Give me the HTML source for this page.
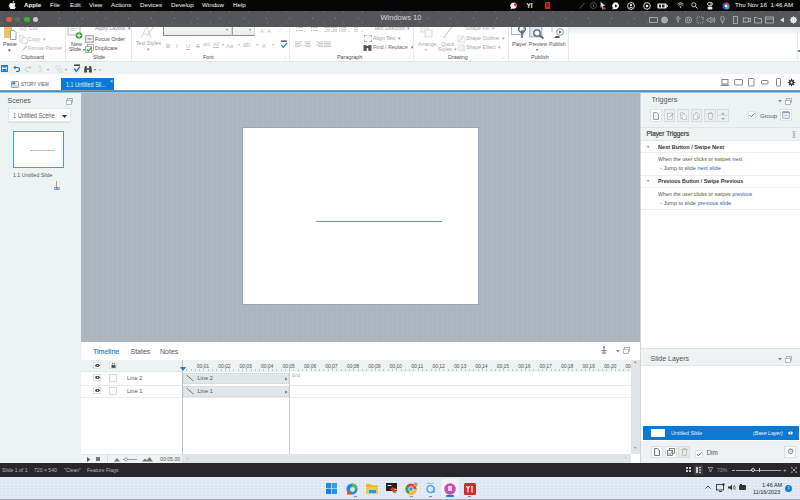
<!DOCTYPE html>
<html><head><meta charset="utf-8">
<style>
*{margin:0;padding:0;box-sizing:border-box}
html,body{width:800px;height:500px;overflow:hidden;background:#fff;font-family:"Liberation Sans",sans-serif}
.a{position:absolute}
.t{position:absolute;white-space:nowrap;line-height:1}
#menubar{left:0;top:0;width:800px;height:11px;background:#050505;color:#f6f6f6;font-size:6.2px}
#menubar .t{top:2px}
#titlebar{left:0;top:11px;width:800px;height:16px;background:#55565a;background-image:radial-gradient(circle,#b08048 0.5px,transparent 0.8px),radial-gradient(circle,#a07848 0.5px,transparent 0.8px);background-size:23px 13px,19px 11px;background-position:2px 1px,11px 6px}
#ribbon{overflow:hidden;left:0;top:27px;width:800px;height:35px;background:#fff;border-bottom:1px solid #e3e7e7;color:#8a8a8a;font-size:5.2px}
#qat{left:0;top:62px;width:800px;height:12px;background:#edf2f2}
#tabrow{left:0;top:74px;width:800px;height:16px;background:#fff}
#tabline{left:0;top:90px;width:800px;height:3px;background:linear-gradient(#7f98ad 0 1px,#3d92d2 1px 2px,#8ccbee 2px 3px)}
#scenes{left:0;top:93px;width:81px;height:370px;background:#ebf4f3;border-right:3px solid #f0f0f2}
#stage{left:81px;top:93px;width:559px;height:249px;background:#adb6be;background-image:repeating-linear-gradient(90deg,#b0b6be 0 3px,#aab6bf 3px 5px)}
#slide{left:243px;top:128px;width:235px;height:176px;background:#fff;box-shadow:0 0 0 1px #9ea7af}
#timeline{left:81px;top:342px;width:559px;height:121px;background:#fff}
#trig{left:640px;top:93px;width:160px;height:255px;background:#fff;border-left:1px solid #cfd6d9}
#layers{left:640px;top:348px;width:160px;height:115px;background:#fff;border-left:1px solid #cfd6d9}
#status{left:0;top:463px;width:800px;height:14px;background:#27272b;color:#b8b8b8;font-size:5.1px}
#taskbar{left:0;top:477px;width:800px;height:23px;background:#dfe6f3;border-bottom:1px solid #a9aeb6;background-image:radial-gradient(circle,#eef3fb .5px,transparent .8px);background-size:4px 3px}
.sep{position:absolute;width:1px;background:#e6e9e9}
.gl{position:absolute;color:#505050;font-size:5.4px;line-height:1;white-space:nowrap}
</style></head><body>

<!-- MAC MENU BAR -->
<div id="menubar" class="a">
 <svg class="a" style="left:9px;top:1px" width="7" height="8" viewBox="0 0 14 16"><path fill="#f0f0f0" d="M11.6 8.5c0-2 1.7-3 1.8-3.1-1-1.4-2.5-1.6-3-1.6-1.3-.1-2.5.8-3.100.8-.7 0-1.700-.8-2.800-.7C3 3.900 1.600 4.700.9 6c-1.500 2.600-.4 6.400 1 8.500.7 1 1.500 2.200 2.600 2.100 1 0 1.400-.7 2.700-.7s1.600.7 2.700.7c1.100 0 1.800-1 2.500-2.100.8-1.100 1.100-2.200 1.100-2.300-.1 0-2.100-.8-2.100-3.200zM9.600 2.400c.6-.7 1-1.700.9-2.600-.8 0-1.800.5-2.400 1.200-.5.600-1 1.600-.9 2.500.9.100 1.800-.4 2.400-1.100z"/></svg>
 <span class="t" style="left:24px;font-weight:bold">Apple</span>
 <span class="t" style="left:50px">File</span>
 <span class="t" style="left:70px">Edit</span>
 <span class="t" style="left:89px">View</span>
 <span class="t" style="left:111px">Actions</span>
 <span class="t" style="left:140px">Devices</span>
 <span class="t" style="left:171px">Develop</span>
 <span class="t" style="left:202px">Window</span>
 <span class="t" style="left:233px">Help</span>
 <span class="t" style="left:735px">Thu Nov 16&nbsp; 1:46 AM</span>
 <svg class="a" style="left:509.5px;top:1.5px" width="9" height="8" viewBox="0 0 9 8"><path d="M4 .5 A3.5 3.2 0 1 1 2 6.6 L.6 7.5 L1 5.6 A3.5 3.2 0 0 1 4 .5z" fill="#f4f4f4"/><circle cx="5.5" cy="2.8" r="1.6" fill="#e23a3a"/></svg>
 <span class="t" style="left:526.5px;top:2.5px;font-size:6.5px;font-weight:bold;color:#f0f0f0">YI</span>
 <svg class="a" style="left:545px;top:2px" width="5" height="7" viewBox="0 0 5 7"><rect x="0" y="0" width="5" height="7" fill="#c42a2a"/><rect x="1" y="1.5" width="3" height=".8" fill="#5a0a0a"/><rect x="1" y="3.5" width="3" height=".8" fill="#5a0a0a"/></svg>
 <svg class="a" style="left:579px;top:2px" width="6" height="7" viewBox="0 0 6 7"><path d="M.5 6.5 L5.5 1" stroke="#6a6a6a" stroke-width=".8"/></svg>
 <svg class="a" style="left:589.5px;top:2px" width="7" height="7" viewBox="0 0 7 7"><circle cx="3.5" cy="3.5" r="3" fill="none" stroke="#5a5a5a" stroke-width=".8"/><rect x="3" y="2" width="1" height="3" fill="#5a5a5a"/></svg>
 <svg class="a" style="left:600px;top:1px" width="6" height="9" viewBox="0 0 6 9"><path d="M.5 .5 L5.5 5 L3 5 L4 8 L2.5 8.5 L1.5 5.5 L.5 7z" fill="#ddd" stroke="#333" stroke-width=".4"/><circle cx="4.5" cy="7.5" r="1.2" fill="#c03030"/></svg>
 <svg class="a" style="left:612px;top:1.5px" width="8" height="8" viewBox="0 0 8 8"><path d="M4 .3 A3.7 3.5 0 1 1 1.7 6.9 L.3 7.7 L.8 5.6 A3.7 3.5 0 0 1 4 .3z" fill="#f4f4f4"/><path d="M3 2.3 L5.6 3.9 L3 5.5z" fill="#111"/></svg>
 <svg class="a" style="left:627px;top:1.5px" width="8" height="8" viewBox="0 0 8 8"><circle cx="4" cy="4" r="3.4" fill="none" stroke="#f0f0f0" stroke-width=".9"/><circle cx="4" cy="3.2" r="1.1" fill="#f0f0f0"/><path d="M2 6 Q4 4 6 6" fill="#f0f0f0"/></svg>
 <svg class="a" style="left:642.5px;top:1.5px" width="8" height="8" viewBox="0 0 8 8"><circle cx="4" cy="4" r="3.3" fill="none" stroke="#f0f0f0" stroke-width=".9"/><circle cx="4" cy="4" r="1.3" fill="#f0f0f0"/></svg>
 <svg class="a" style="left:657px;top:2.5px" width="11" height="6" viewBox="0 0 11 6"><rect x=".4" y=".4" width="9.2" height="5.2" rx="1" fill="#f0f0f0"/><rect x="9.8" y="2" width="1" height="2" fill="#f0f0f0"/><rect x="2" y="1.6" width="2" height="2.8" fill="#222"/><rect x="5" y="1.6" width="2.5" height="2.8" fill="#222"/></svg>
 <svg class="a" style="left:677px;top:2px" width="7" height="6" viewBox="0 0 7 6"><path d="M.3 2.2 A4.5 4.5 0 0 1 6.7 2.2 M1.4 3.4 A3 3 0 0 1 5.6 3.4" stroke="#eee" stroke-width=".8" fill="none"/><circle cx="3.5" cy="5" r=".8" fill="#eee"/></svg>
 <svg class="a" style="left:691px;top:2px" width="7" height="7" viewBox="0 0 7 7"><circle cx="2.8" cy="2.8" r="2.1" fill="none" stroke="#eee" stroke-width=".8"/><path d="M4.4 4.4 L6.5 6.5" stroke="#eee" stroke-width=".9"/></svg>
 <svg class="a" style="left:706px;top:1.5px" width="8" height="8" viewBox="0 0 8 8"><rect x="1.5" y=".5" width="5" height="3" rx="1.5" fill="none" stroke="#eee" stroke-width=".8"/><rect x="1.5" y="4.5" width="5" height="3" rx="1.5" fill="#eee"/><circle cx="5" cy="2" r=".8" fill="#eee"/></svg>
 <svg class="a" style="left:722px;top:1.5px" width="8" height="8" viewBox="0 0 8 8"><circle cx="4" cy="4" r="3.5" fill="#3a5ad0"/><path d="M4 .5 A3.5 3.5 0 0 1 7.5 4 H4z" fill="#d04080"/><path d="M4 4 H7.5 A3.5 3.5 0 0 1 4 7.5z" fill="#30b0d0"/><circle cx="4" cy="4" r="1.3" fill="#fff"/></svg>
</div>

<!-- TITLE BAR -->
<div id="titlebar" class="a">
 <div class="a" style="left:6px;top:5.6px;width:5.6px;height:5.6px;border-radius:50%;background:#e2564c"></div>
 <div class="a" style="left:14.7px;top:5.6px;width:5.6px;height:5.6px;border-radius:50%;background:#6c6c6e"></div>
 <div class="a" style="left:24.1px;top:5.6px;width:5.6px;height:5.6px;border-radius:50%;background:#33b83c"></div>
 <div class="a" style="left:32.5px;top:5.6px;width:5.6px;height:5.6px;border-radius:50%;background:#cfcfcf"></div>
 <span class="t" style="left:380.5px;top:3px;font-size:7.5px;color:#d8d8d8">Windows 10</span>
 <svg class="a" style="left:649px;top:5px" width="150" height="8" viewBox="0 0 150 8">
  <g fill="none" stroke="#b8b8b8" stroke-width=".8">
   <rect x=".5" y="1.5" width="8" height="5"/>
   <circle cx="15.5" cy="4" r="3" fill="#aaa"/>
   <path d="M28 1 A1.5 1.5 0 0 1 30 1 V4 A1.5 1.5 0 0 1 28 4z M29 5 V7"/>
   <circle cx="39.5" cy="4" r="3"/><circle cx="39.5" cy="4" r="1.2"/>
   <rect x="48" y="1" width="6" height="6" stroke-dasharray="1 1"/>
   <path d="M58 3 H60 L62 1 V7 L60 5 H58z M63.5 2 Q65 4 63.5 6 M65 1 Q67 4 65 7"/>
   <path d="M72 1.5 A1.5 1.5 0 0 1 75 1.5 V4 A1.5 1.5 0 0 1 72 4z M73.5 5.5 V7.5"/>
   <rect x="84.5" y=".5" width="4" height="7"/>
   <rect x="94.5" y="2" width="5" height="4"/><path d="M99.5 3 L101.5 2 V6 L99.5 5"/>
   <path d="M105.5 1.5 H108 L109 2.5 H112.5 V7 H105.5z"/>
   <rect x="116.5" y="1" width="8" height="6"/><path d="M117 3 H124"/>
  </g>
  <path d="M131 4 L135 1.5 V6.5z" fill="#ddd"/>
  <circle cx="144.5" cy="4" r="2.2" fill="none" stroke="#eee" stroke-width="1.5"/>
  <path d="M144.5 .3 V7.7 M140.8 4 H148.2 M141.9 1.4 L147.1 6.6 M147.1 1.4 L141.9 6.6" stroke="#eee" stroke-width="1"/>
 </svg>
</div>

<!-- RIBBON -->
<div id="ribbon" class="a">
 <!-- clipboard -->
 <svg class="a" style="left:3px;top:0" width="14" height="13" viewBox="0 0 14 13"><rect x="1" y="-2" width="8" height="13" fill="#eec068"/><path d="M7.5 3.5 H11 L13 5.5 V12.5 H7.5z" fill="#fff" stroke="#888" stroke-width=".8"/></svg>
 <span class="gl" style="left:3px;top:15px">Paste</span>
 <span class="gl" style="left:8px;top:21px;font-size:5px">▾</span>
 <span class="t" style="left:29px;top:-1px;color:#a0a0a0">Cut</span>
 <svg class="a" style="left:19px;top:0" width="8" height="4" viewBox="0 0 8 4"><circle cx="2" cy="2.2" r="1.4" fill="none" stroke="#c8c8c8" stroke-width=".7"/><circle cx="6" cy="2.2" r="1.4" fill="none" stroke="#c8c8c8" stroke-width=".7"/></svg>
 <svg class="a" style="left:18.5px;top:7.5px" width="9" height="9" viewBox="0 0 9 9"><path d="M.6 .6 H4 L5.5 2 V6.4 H.6z" fill="#fbfbfb" stroke="#cfcfcf" stroke-width=".7"/><path d="M3 2.6 H6.4 L8.4 4.6 V8.4 H3z" fill="#fbfbfb" stroke="#c8c8c8" stroke-width=".7"/></svg>
 <span class="t" style="left:28px;top:9.5px;color:#b0b0b0">Copy &nbsp;▾</span>
 <svg class="a" style="left:20.5px;top:17.5px" width="7" height="7" viewBox="0 0 7 7"><path d="M6 1 L2.5 4.5" stroke="#c5c5c5" stroke-width="1.4"/><path d="M2.5 4.5 L.8 6.3" stroke="#b8b8b8" stroke-width="1"/></svg>
 <span class="t" style="left:28px;top:18.5px;color:#b0b0b0">Format Painter</span>
 <span class="gl" style="left:21px;top:27.5px">Clipboard</span>
 <div class="sep" style="left:65px;top:0;height:34px"></div>
 <!-- slide -->
 <svg class="a" style="left:67px;top:0" width="17" height="13" viewBox="0 0 17 13"><rect x="1" y="-1" width="12" height="9" fill="#fbfbfb" stroke="#a8a8a8" stroke-width=".8"/><rect x="3" y="1" width="8" height="1" fill="#d0d0d0"/><rect x="3" y="3" width="6" height="1" fill="#d8d8d8"/><circle cx="12" cy="8.5" r="3.3" fill="#3aa845"/><path d="M12 6.6 V10.4 M10.1 8.5 H13.9" stroke="#fff" stroke-width="1.1"/></svg>
 <span class="gl" style="left:71px;top:14.5px">New</span>
 <span class="gl" style="left:69px;top:20px">Slide <span style="font-size:4px">▾</span></span>
 <span class="t" style="left:95px;top:-1.5px;color:#8a8a8a">Apply Layout &nbsp;▾</span>
 <svg class="a" style="left:85px;top:8px" width="9" height="8" viewBox="0 0 9 8"><rect x=".8" y=".8" width="7.4" height="6.4" fill="#f8f8f8" stroke="#7a7a7a" stroke-width=".8"/><rect x="2.5" y="3.5" width="4" height=".9" fill="#555"/></svg>
 <span class="gl" style="left:95px;top:10px">Focus Order</span>
 <svg class="a" style="left:85px;top:17px" width="9" height="9" viewBox="0 0 9 9"><rect x="2.5" y=".5" width="6" height="6" fill="#fff" stroke="#8a8a8a" stroke-width=".7"/><rect x=".5" y="2.5" width="6" height="6" fill="#eef4ea" stroke="#8a8a8a" stroke-width=".7"/><path d="M1.8 5.5 L3.4 7.2 L6.5 3.2" stroke="#2f9a3a" stroke-width="1.1" fill="none"/></svg>
 <span class="gl" style="left:95px;top:19px">Duplicate</span>
 <span class="gl" style="left:93px;top:28px">Slide</span>
 <div class="sep" style="left:131px;top:0;height:34px"></div>
 <!-- font -->
 <svg class="a" style="left:138px;top:0" width="18" height="12" viewBox="0 0 18 12"><path d="M3 11 L9 -1 L13 11 M5 7 H11" fill="none" stroke="#dcdcdc" stroke-width="1.2"/><path d="M16 -1 L9 9" stroke="#d0d0d0" stroke-width="1"/></svg>
 <span class="t" style="left:136px;top:14px;color:#a0a0a0">Text Styles</span>
 <span class="t" style="left:147px;top:20px;color:#a0a0a0;font-size:5px">▾</span>
 <div class="a" style="left:162.5px;top:-2px;width:69.5px;height:11px;background:linear-gradient(#f6f7f7,#e9ecec);border:1px solid #d5d5d5;border-left-color:#8f8f8f;border-bottom-color:#8f8f8f"></div>
 <div class="a" style="left:232px;top:-2px;width:22.5px;height:11px;background:linear-gradient(#f6f7f7,#e9ecec);border:1px solid #d5d5d5;border-left-color:#a5a5a5;border-bottom-color:#8f8f8f"></div>
 <span class="t" style="left:226px;top:1px;font-size:4px;color:#888">▾</span>
 <span class="t" style="left:249px;top:1px;font-size:4px;color:#888">▾</span>
 <span class="t" style="left:260px;top:1px;color:#c8c8c8;font-size:6px">A<sup style="font-size:3px">+</sup> A<sup style="font-size:3px">-</sup></span>
 <span class="t" style="left:280px;top:0px;color:#c8c8c8;font-size:6px">⁄</span>
 <span class="t" style="left:166px;top:15.5px;color:#c0c0c0;font-size:6px;font-weight:bold">B</span>
 <span class="t" style="left:176px;top:15.5px;color:#c0c0c0;font-size:6px;font-style:italic">I</span>
 <span class="t" style="left:186px;top:15.5px;color:#c0c0c0;font-size:6px;text-decoration:underline">U</span>
 <span class="t" style="left:196px;top:15.5px;color:#c0c0c0;font-size:6px;text-decoration:line-through">S</span>
 <span class="t" style="left:203px;top:16px;color:#c0c0c0;font-size:4.5px">abc</span>
 <span class="t" style="left:213px;top:15px;color:#c0c0c0;font-size:5px;text-decoration:underline">AV</span>
 <span class="t" style="left:222px;top:16px;color:#c0c0c0;font-size:4px">▾</span>
 <span class="t" style="left:226px;top:15.5px;color:#c0c0c0;font-size:6px">Aa</span>
 <span class="t" style="left:238px;top:16px;color:#c0c0c0;font-size:4px">▾</span>
 <span class="t" style="left:243px;top:15px;color:#c0c0c0;font-size:6.5px">ab</span>
 <span class="t" style="left:256px;top:16px;color:#c0c0c0;font-size:4px">▾</span>
 <span class="t" style="left:262px;top:15.5px;color:#c0c0c0;font-size:6px">A</span>
 <span class="t" style="left:272px;top:16px;color:#c0c0c0;font-size:4px">▾</span>
 <svg class="a" style="left:280px;top:13px" width="8" height="9" viewBox="0 0 8 9"><rect x="1" y="0.5" width="6" height="1.3" fill="#444"/><path d="M1.5 5 L3.3 7.3 L7 2.8" stroke="#2c7fd0" stroke-width="1.3" fill="none"/></svg>
 <span class="gl" style="left:203px;top:28px">Font</span>
 <span class="t" style="left:284px;top:28px;color:#aaa;font-size:4px">⌟</span>
 <div class="sep" style="left:289px;top:0;height:34px"></div>
 <!-- paragraph -->
 <svg class="a" style="left:290px;top:-3px" width="90" height="28" viewBox="0 0 90 28"><g fill="#bdbdbd"><rect x="6" y="3" width="1.2" height="1.2"/><rect x="8" y="3.2" width="5" height=".8"/><rect x="6" y="6" width="1.2" height="1.2"/><rect x="8" y="6.2" width="5" height=".8"/><path d="M14 7 L15 8 L16 7z"/><rect x="21" y="3" width="1.2" height="1.2"/><rect x="23" y="3.2" width="5" height=".8"/><rect x="21" y="6" width="1.2" height="1.2"/><rect x="23" y="6.2" width="5" height=".8"/><path d="M29 7 L30 8 L31 7z"/><rect x="34" y="3.2" width="6" height=".8"/><rect x="36" y="5" width="4" height=".8"/><rect x="34" y="6.8" width="6" height=".8"/><rect x="41" y="3.2" width="6" height=".8"/><rect x="43" y="5" width="4" height=".8"/><rect x="41" y="6.8" width="6" height=".8"/><rect x="51" y="3.2" width="5" height=".8"/><rect x="51" y="5" width="5" height=".8"/><rect x="51" y="6.8" width="5" height=".8"/><rect x="49.5" y="3" width=".7" height="5"/><path d="M58 7 L59 8 L60 7z"/><rect x="64" y="3.2" width="4" height=".8"/><rect x="64" y="5" width="4" height=".8"/><rect x="64" y="6.8" width="4" height=".8"/><path d="M71 7 L72 8 L73 7z"/><rect x="5" y="17.5" width="7" height=".8"/><rect x="5" y="19.1" width="5" height=".8"/><rect x="5" y="20.7" width="7" height=".8"/><rect x="5" y="22.3" width="5" height=".8"/><rect x="14" y="17.5" width="7" height=".8"/><rect x="15" y="19.1" width="5" height=".8"/><rect x="14" y="20.7" width="7" height=".8"/><rect x="15" y="22.3" width="5" height=".8"/><rect x="26" y="17.5" width="7" height=".8"/><rect x="28" y="19.1" width="5" height=".8"/><rect x="26" y="20.7" width="7" height=".8"/><rect x="28" y="22.3" width="5" height=".8"/><rect x="34" y="17.5" width="7" height=".8"/><rect x="34" y="19.1" width="7" height=".8"/><rect x="34" y="20.7" width="7" height=".8"/><rect x="34" y="22.3" width="7" height=".8"/></g></svg>
 <span class="t" style="left:374px;top:-1px;color:#999">Text Direction ▾</span>
 <div class="a" style="left:364px;top:8px;width:8px;height:7px;border:1px dashed #bbb"></div>
 <span class="t" style="left:373px;top:9px;color:#a0a0a0">Align Text &nbsp;▾</span>
 <svg class="a" style="left:363px;top:17px" width="9" height="7" viewBox="0 0 9 7"><rect x="0.5" y="1" width="3.3" height="6" rx="1" fill="#555"/><rect x="5.2" y="1" width="3.3" height="6" rx="1" fill="#555"/><rect x="3" y="2" width="3" height="2" fill="#555"/></svg>
 <span class="gl" style="left:373px;top:18px;color:#707070">Find / Replace &nbsp;▾</span>
 <span class="gl" style="left:337px;top:28px">Paragraph</span>
 <span class="t" style="left:408px;top:28px;color:#aaa;font-size:4px">⌟</span>
 <div class="sep" style="left:413px;top:0;height:34px"></div>
 <!-- drawing -->
 <svg class="a" style="left:420px;top:0" width="13" height="11" viewBox="0 0 13 11"><rect x="1" y="-2" width="7" height="7" fill="#f2f2f2" stroke="#d8d8d8" stroke-width=".8"/><rect x="5" y="3" width="7" height="7" fill="#fafafa" stroke="#d0d0d0" stroke-width=".8"/></svg>
 <span class="t" style="left:418px;top:15px;color:#a8a8a8">Arrange</span>
 <span class="t" style="left:425px;top:21px;color:#a8a8a8;font-size:4px">▾</span>
 <svg class="a" style="left:440px;top:0" width="14" height="12" viewBox="0 0 14 12"><path d="M2 -1 A5.5 5.5 0 0 0 7 10" fill="none" stroke="#e2e2e2" stroke-width=".9"/><path d="M12 0 L5 9" stroke="#d0d0d0" stroke-width="1.2"/><path d="M5 9 L4 11" stroke="#c8c8c8" stroke-width="1"/></svg>
 <span class="t" style="left:441px;top:15px;color:#a8a8a8">Quick</span>
 <span class="t" style="left:438px;top:20px;color:#a8a8a8">Styles ▾</span>
 <span class="t" style="left:466px;top:-1px;color:#aaa">Shape Fill &nbsp;▾</span>
 <svg class="a" style="left:457px;top:8px" width="9" height="8" viewBox="0 0 9 8"><path d="M.8 .8 H6 L8 2.8 V7.2 H.8z" fill="#fafafa" stroke="#d5d5d5" stroke-width=".7"/><path d="M2 6 L6.5 1.5" stroke="#bbb" stroke-width=".8"/></svg>
 <span class="t" style="left:466px;top:9px;color:#a8a8a8">Shape Outline &nbsp;▾</span>
 <svg class="a" style="left:457px;top:17px" width="9" height="8" viewBox="0 0 9 8"><rect x="2" y="1.5" width="6" height="6" fill="#e8e8e8"/><rect x=".8" y=".5" width="6" height="6" fill="#f0f0f0" stroke="#d8d8d8" stroke-width=".6" stroke-dasharray="1 .6"/></svg>
 <span class="t" style="left:466px;top:18px;color:#a8a8a8">Shape Effect &nbsp;▾</span>
 <span class="gl" style="left:448px;top:28px">Drawing</span>
 <span class="t" style="left:502px;top:28px;color:#aaa;font-size:4px">⌟</span>
 <div class="sep" style="left:508px;top:0;height:34px"></div>
 <!-- publish -->
 <svg class="a" style="left:511px;top:0" width="16" height="12" viewBox="0 0 16 12"><rect x=".5" y="-1" width="12" height="8.5" fill="#f6f8fa" stroke="#9aa4ae" stroke-width=".8"/><path d="M8.6 0 A3.2 3.2 0 1 0 13.4 0" fill="none" stroke="#56708a" stroke-width="1.4"/><rect x="10.2" y="3" width="1.6" height="8" rx=".6" fill="#56708a"/></svg>
 <span class="gl" style="left:512px;top:14.5px;font-size:5.1px">Player</span>
 <svg class="a" style="left:529px;top:0" width="16" height="12" viewBox="0 0 16 12"><rect x=".8" y="-1" width="12" height="11" fill="#dde8f4" stroke="#8e9aa6" stroke-width=".8"/><circle cx="8" cy="6" r="3.2" fill="#f4f8fc" stroke="#4e6680" stroke-width="1.3"/><path d="M10.3 8.3 L14.5 11.5" stroke="#4e6680" stroke-width="1.7"/></svg>
 <span class="gl" style="left:529px;top:14.5px;font-size:5.1px">Preview</span>
 <span class="gl" style="left:536px;top:21px;font-size:4px">▾</span>
 <svg class="a" style="left:550px;top:0" width="14" height="12" viewBox="0 0 14 12"><path d="M2 5 V-1 H8" fill="none" stroke="#aaa" stroke-width=".8"/><circle cx="10" cy="5" r="3.4" fill="#fff" stroke="#7a8a96" stroke-width=".9"/><path d="M9 3.3 L11.8 5 L9 6.7z" fill="#2a9a6a"/><path d="M4 11 L6 9 H9 L10 11z" fill="#4a5560"/></svg>
 <span class="gl" style="left:549px;top:14.5px;font-size:5.1px">Publish</span>
 <span class="gl" style="left:531px;top:28px">Publish</span>
 <div class="sep" style="left:568px;top:0;height:34px"></div>
 <div class="a" style="left:569px;top:0;width:231px;height:7px;background:linear-gradient(#e6eaec,#f8f9f9)"></div>
 <div class="a" style="left:797px;top:0;width:1px;height:34px;background:#e8eaea"></div>
 <div class="a" style="left:798px;top:23px;width:2px;height:2px;background:#4a8fd0"></div>
</div>

<!-- QAT -->
<div id="qat" class="a">
 <svg class="a" style="left:1px;top:3px" width="7" height="7" viewBox="0 0 7 7"><rect x="0.5" y="0.5" width="6" height="6" fill="none" stroke="#1f7ad0" stroke-width="1"/><rect x="1.5" y="0.5" width="4" height="2" fill="#1f7ad0"/><rect x="1.5" y="4" width="4" height="2.5" fill="#1f7ad0"/></svg>
 <svg class="a" style="left:13px;top:3px" width="7" height="7" viewBox="0 0 7 7"><path d="M1 2.5 H4.5 A2 2 0 0 1 4.5 6.5 H3" stroke="#1f6fc0" stroke-width="1.1" fill="none"/><path d="M0.3 2.5 L2.5 0.5 V4.5z" fill="#1f6fc0"/></svg>
 <svg class="a" style="left:25px;top:3px" width="7" height="7" viewBox="0 0 7 7"><path d="M6 2.5 H2.5 A2 2 0 0 0 2.5 6.5 H4" stroke="#c8c8c8" stroke-width="1" fill="none"/><path d="M6.7 2.5 L4.5 0.5 V4.5z" fill="#c8c8c8"/></svg>
 <svg class="a" style="left:37px;top:3px" width="7" height="8" viewBox="0 0 7 8"><path d="M1 1 A3 3 0 1 1 2 7" stroke="#d2d2d2" stroke-width="1" fill="none"/></svg>
 <span class="t" style="left:47px;top:5.5px;font-size:4px;color:#999">▾</span>
 <svg class="a" style="left:55px;top:3px" width="8" height="8" viewBox="0 0 8 8"><rect x=".8" y=".8" width="3.5" height="3.5" rx="1.2" fill="none" stroke="#d5d5d5" stroke-width=".8"/><rect x="3.7" y="3.7" width="3.5" height="3.5" rx="1.2" fill="none" stroke="#d5d5d5" stroke-width=".8"/></svg>
 <span class="t" style="left:65px;top:5.5px;font-size:4px;color:#999">▾</span>
 <svg class="a" style="left:73px;top:2px" width="8" height="9" viewBox="0 0 8 9"><rect x="1" y="0.5" width="6" height="1.4" fill="#333"/><path d="M1.3 4.8 L3.3 7.3 L7 2.6" stroke="#1f7ad0" stroke-width="1.4" fill="none"/></svg>
 <svg class="a" style="left:84px;top:3.5px" width="8" height="7" viewBox="0 0 8 7"><path d="M1 0 H2.8 V2 L3.2 6.5 H0 L.4 2z M5.2 0 H7 L7.6 2 L8 6.5 H4.8 L5.2 2z" fill="#4a4a4a"/><rect x="2.6" y="2.2" width="2.8" height="1.6" fill="#4a4a4a"/></svg>
 <span class="t" style="left:94px;top:5.5px;font-size:4px;color:#777">▾</span>
 <span class="t" style="left:99px;top:5.5px;font-size:4px;color:#777">▿</span>
</div>

<!-- TAB ROW -->
<div id="tabrow" class="a">
 <svg class="a" style="left:11px;top:7px" width="8" height="7" viewBox="0 0 8 7"><rect x="0.5" y="0.5" width="7" height="6" rx=".6" fill="#eef0f2" stroke="#8a8a8a" stroke-width=".8"/><rect x="1.2" y="1.2" width="3" height="2.2" fill="#2f7fd0"/><rect x="1.2" y="4.2" width="5.6" height="1.6" fill="#d8dde2"/></svg>
 <span class="t" style="left:21px;top:7.6px;font-size:5.9px;color:#505050;transform:scaleX(.76);transform-origin:0 0">STORY VIEW</span>
 <div class="a" style="left:61px;top:4px;width:53px;height:12px;background:#0c79d6"></div>
 <span class="t" style="left:66px;top:7.8px;font-size:6.5px;color:#e6f1fb;transform:scaleX(.84);transform-origin:0 0">1.1 Untitled Sli...</span>
 <span class="t" style="left:110px;top:4.5px;font-size:5px;color:#e6f1fb">×</span>
 <svg class="a" style="left:720px;top:4px" width="78" height="11" viewBox="0 0 78 11">
  <g fill="none" stroke="#6a6a6a" stroke-width=".8">
   <rect x="2" y="1.5" width="6" height="4.5"/><path d="M.8 7.3 H9.2" stroke-width="1"/>
   <rect x="14.5" y="1.5" width="8" height="5.5" rx=".8"/>
   <rect x="28.5" y=".5" width="5.5" height="7.5" rx=".8"/>
   <rect x="41.5" y="2.5" width="6.5" height="3.5" rx=".8"/>
   <rect x="56.5" y=".5" width="4" height="7.5" rx=".8"/>
  </g>
  <path d="M71.5 .8 V8.2 M67.8 4.5 H75.2 M68.9 1.9 L74.1 7.1 M74.1 1.9 L68.9 7.1" stroke="#333" stroke-width="1.1"/>
  <circle cx="71.5" cy="4.5" r="2.5" fill="#333"/><circle cx="71.5" cy="4.5" r="1" fill="#fff"/>
 </svg>
</div>
<div id="tabline" class="a"></div>

<!-- SCENES -->
<div id="scenes" class="a">
 <span class="t" style="left:7.5px;top:4px;font-size:7px;color:#555">Scenes</span>
 <div class="a" style="left:7.5px;top:15px;width:63px;height:14px;background:#fff;border:1px solid #e3e8e8;border-radius:1px;box-shadow:0 .5px 1px #d8dede"></div>
 <span class="t" style="left:13.3px;top:20.2px;font-size:6.6px;color:#5a5a5a;transform:scaleX(.86);transform-origin:0 0">1 Untitled Scene</span>
 <div class="a" style="left:13px;top:37.5px;width:51px;height:37.5px;background:#fff;border:1.5px solid #3d9ee0"></div>
 <span class="t" style="left:13px;top:79.5px;font-size:5.6px;color:#555;transform:scaleX(.93);transform-origin:0 0">1.1 Untitled Slide</span>
 <svg class="a" style="left:65.5px;top:4.5px" width="7" height="7" viewBox="0 0 7 7"><rect x="1.4" y=".5" width="5" height="4" fill="none" stroke="#a5a5a5" stroke-width=".8"/><rect x=".5" y="2.3" width="5" height="4.2" fill="#fff" stroke="#a5a5a5" stroke-width=".8"/></svg>
 <svg class="a" style="left:62px;top:22px" width="5" height="3" viewBox="0 0 5 3"><path d="M0 0 H5 L2.5 3z" fill="#333"/></svg>
 <div class="a" style="left:30px;top:57px;width:25px;height:1px;background:#b5bcc4"></div>
 <div class="a" style="left:56px;top:87.5px;width:1px;height:6px;background:#d09090"></div>
 <svg class="a" style="left:53.5px;top:93.5px" width="6" height="3" viewBox="0 0 6 3"><rect x=".4" y=".4" width="2.6" height="2.2" rx="1" fill="none" stroke="#2a6ab0" stroke-width=".8"/><rect x="3" y=".4" width="2.6" height="2.2" rx="1" fill="none" stroke="#2a6ab0" stroke-width=".8"/></svg>
</div>

<!-- STAGE -->
<div id="stage" class="a"></div>
<div id="slide" class="a"></div>
<div class="a" style="left:316px;top:221px;width:126px;height:1px;background:repeating-linear-gradient(90deg,#8c9ca8 0 1px,#5a8fc8 1px 3px)"></div>

<!-- TIMELINE -->
<div id="timeline" class="a">
 <span class="t" style="left:12px;top:6.3px;font-size:7px;color:#1f7fd3;-webkit-text-stroke:.15px #1f7fd3">Timeline</span>
 <span class="t" style="left:49.5px;top:6.3px;font-size:7px;color:#555">States</span>
 <span class="t" style="left:79px;top:6.3px;font-size:7px;color:#555">Notes</span>
 <!-- right top icons -->
 <svg class="a" style="left:519px;top:4px" width="8" height="9" viewBox="0 0 8 9"><circle cx="4" cy="1.3" r="1.1" fill="#5a8ab8"/><path d="M4 2.5 V8 M1.5 4.5 H6.5 M1.5 7 H6.5" stroke="#7a8a96" stroke-width="1.2"/></svg>
 <svg class="a" style="left:534.5px;top:8px" width="4" height="3" viewBox="0 0 4 3"><path d="M0 0 H4 L2 2.5z" fill="#888"/></svg>
 <svg class="a" style="left:541.5px;top:5px" width="7" height="7" viewBox="0 0 7 7"><rect x="1.4" y=".5" width="5" height="4" fill="none" stroke="#a5a5a5" stroke-width=".8"/><rect x=".5" y="2.3" width="5" height="4.2" fill="#fff" stroke="#a5a5a5" stroke-width=".8"/></svg>
 <!-- header row -->
 <div class="a" style="left:0;top:17.5px;width:553px;height:12px;background:#edf2f2;border-bottom:1px solid #e2e7e7"></div>
 <div class="a" style="left:12px;top:20px;width:8px;height:7px;background:#fff;border:1px solid #dde2e2"></div>
 <svg class="a" style="left:13.5px;top:22px" width="5" height="3" viewBox="0 0 5 3"><ellipse cx="2.5" cy="1.5" rx="2.4" ry="1.4" fill="#444"/><circle cx="2.5" cy="1.5" r=".6" fill="#fff"/></svg>
 <div class="a" style="left:28px;top:20px;width:8px;height:7px;background:#fff;border:1px solid #dde2e2"></div>
 <svg class="a" style="left:29.5px;top:21px" width="5" height="5" viewBox="0 0 5 5"><path d="M1.2 2.3 V1.5 A1.3 1.3 0 0 1 3.8 1.5 V2.3" stroke="#444" stroke-width=".8" fill="none"/><rect x=".5" y="2.2" width="4" height="2.6" fill="#444"/></svg>
 <!-- rows -->
 <div class="a" style="left:0;top:42.5px;width:101px;height:1px;background:#e8ecec"></div>
 <div class="a" style="left:208px;top:42.5px;width:342px;height:1px;background:#e8ecec"></div>
 <div class="a" style="left:0;top:55px;width:553px;height:1px;background:#e8ecec"></div>
 <div class="a" style="left:12px;top:32px;width:8px;height:7px;background:#fff;border:1px solid #dde2e2"></div>
 <svg class="a" style="left:13.5px;top:34px" width="5" height="3" viewBox="0 0 5 3"><ellipse cx="2.5" cy="1.5" rx="2.4" ry="1.4" fill="#444"/><circle cx="2.5" cy="1.5" r=".6" fill="#fff"/></svg>
 <div class="a" style="left:28px;top:32px;width:8px;height:8px;background:#fff;border:1px solid #d5dada"></div>
 <span class="t" style="left:46px;top:33.5px;font-size:5.6px;color:#555">Line 2</span>
 <div class="a" style="left:12px;top:45px;width:8px;height:7px;background:#fff;border:1px solid #dde2e2"></div>
 <svg class="a" style="left:13.5px;top:47px" width="5" height="3" viewBox="0 0 5 3"><ellipse cx="2.5" cy="1.5" rx="2.4" ry="1.4" fill="#444"/><circle cx="2.5" cy="1.5" r=".6" fill="#fff"/></svg>
 <div class="a" style="left:28px;top:45px;width:8px;height:8px;background:#fff;border:1px solid #d5dada"></div>
 <span class="t" style="left:46px;top:46.5px;font-size:5.6px;color:#555">Line 1</span>
 <!-- ruler -->
 <div class="a" style="left:101px;top:17.5px;width:452px;height:12px;background:#edf2f2"></div>
 <div class="a" id="ruler" style="left:101px;top:21.5px;width:449px;height:8px;overflow:hidden"><span class="t" style="left:14.4px;top:0;font-size:5.1px;color:#555;width:13px;text-align:center;letter-spacing:-0.1px">00:01</span><span class="t" style="left:35.8px;top:0;font-size:5.1px;color:#555;width:13px;text-align:center;letter-spacing:-0.1px">00:02</span><span class="t" style="left:57.2px;top:0;font-size:5.1px;color:#555;width:13px;text-align:center;letter-spacing:-0.1px">00:03</span><span class="t" style="left:78.7px;top:0;font-size:5.1px;color:#555;width:13px;text-align:center;letter-spacing:-0.1px">00:04</span><span class="t" style="left:100.1px;top:0;font-size:5.1px;color:#555;width:13px;text-align:center;letter-spacing:-0.1px">00:05</span><span class="t" style="left:121.5px;top:0;font-size:5.1px;color:#555;width:13px;text-align:center;letter-spacing:-0.1px">00:06</span><span class="t" style="left:142.9px;top:0;font-size:5.1px;color:#555;width:13px;text-align:center;letter-spacing:-0.1px">00:07</span><span class="t" style="left:164.4px;top:0;font-size:5.1px;color:#555;width:13px;text-align:center;letter-spacing:-0.1px">00:08</span><span class="t" style="left:185.8px;top:0;font-size:5.1px;color:#555;width:13px;text-align:center;letter-spacing:-0.1px">00:09</span><span class="t" style="left:207.2px;top:0;font-size:5.1px;color:#555;width:13px;text-align:center;letter-spacing:-0.1px">00:10</span><span class="t" style="left:228.7px;top:0;font-size:5.1px;color:#555;width:13px;text-align:center;letter-spacing:-0.1px">00:11</span><span class="t" style="left:250.1px;top:0;font-size:5.1px;color:#555;width:13px;text-align:center;letter-spacing:-0.1px">00:12</span><span class="t" style="left:271.5px;top:0;font-size:5.1px;color:#555;width:13px;text-align:center;letter-spacing:-0.1px">00:13</span><span class="t" style="left:292.9px;top:0;font-size:5.1px;color:#555;width:13px;text-align:center;letter-spacing:-0.1px">00:14</span><span class="t" style="left:314.4px;top:0;font-size:5.1px;color:#555;width:13px;text-align:center;letter-spacing:-0.1px">00:15</span><span class="t" style="left:335.8px;top:0;font-size:5.1px;color:#555;width:13px;text-align:center;letter-spacing:-0.1px">00:16</span><span class="t" style="left:357.2px;top:0;font-size:5.1px;color:#555;width:13px;text-align:center;letter-spacing:-0.1px">00:17</span><span class="t" style="left:378.7px;top:0;font-size:5.1px;color:#555;width:13px;text-align:center;letter-spacing:-0.1px">00:18</span><span class="t" style="left:400.1px;top:0;font-size:5.1px;color:#555;width:13px;text-align:center;letter-spacing:-0.1px">00:19</span><span class="t" style="left:421.5px;top:0;font-size:5.1px;color:#555;width:13px;text-align:center;letter-spacing:-0.1px">00:20</span><span class="t" style="left:443.0px;top:0;font-size:5.1px;color:#555;width:13px;text-align:center;letter-spacing:-0.1px">00:21</span></div>
 <div class="a" style="left:101px;top:0;width:449px;height:40px;overflow:hidden"><div class="a" style="left:0px;top:25.5px;width:1px;height:3px;background:#c0c7cb"></div><div class="a" style="left:4px;top:26.5px;width:1px;height:2px;background:#c0c7cb"></div><div class="a" style="left:9px;top:26.5px;width:1px;height:2px;background:#c0c7cb"></div><div class="a" style="left:13px;top:26.5px;width:1px;height:2px;background:#c0c7cb"></div><div class="a" style="left:17px;top:26.5px;width:1px;height:2px;background:#c0c7cb"></div><div class="a" style="left:21px;top:25.5px;width:1px;height:3px;background:#c0c7cb"></div><div class="a" style="left:26px;top:26.5px;width:1px;height:2px;background:#c0c7cb"></div><div class="a" style="left:30px;top:26.5px;width:1px;height:2px;background:#c0c7cb"></div><div class="a" style="left:34px;top:26.5px;width:1px;height:2px;background:#c0c7cb"></div><div class="a" style="left:39px;top:26.5px;width:1px;height:2px;background:#c0c7cb"></div><div class="a" style="left:43px;top:25.5px;width:1px;height:3px;background:#c0c7cb"></div><div class="a" style="left:47px;top:26.5px;width:1px;height:2px;background:#c0c7cb"></div><div class="a" style="left:51px;top:26.5px;width:1px;height:2px;background:#c0c7cb"></div><div class="a" style="left:56px;top:26.5px;width:1px;height:2px;background:#c0c7cb"></div><div class="a" style="left:60px;top:26.5px;width:1px;height:2px;background:#c0c7cb"></div><div class="a" style="left:64px;top:25.5px;width:1px;height:3px;background:#c0c7cb"></div><div class="a" style="left:69px;top:26.5px;width:1px;height:2px;background:#c0c7cb"></div><div class="a" style="left:73px;top:26.5px;width:1px;height:2px;background:#c0c7cb"></div><div class="a" style="left:77px;top:26.5px;width:1px;height:2px;background:#c0c7cb"></div><div class="a" style="left:81px;top:26.5px;width:1px;height:2px;background:#c0c7cb"></div><div class="a" style="left:86px;top:25.5px;width:1px;height:3px;background:#c0c7cb"></div><div class="a" style="left:90px;top:26.5px;width:1px;height:2px;background:#c0c7cb"></div><div class="a" style="left:94px;top:26.5px;width:1px;height:2px;background:#c0c7cb"></div><div class="a" style="left:99px;top:26.5px;width:1px;height:2px;background:#c0c7cb"></div><div class="a" style="left:103px;top:26.5px;width:1px;height:2px;background:#c0c7cb"></div><div class="a" style="left:107px;top:25.5px;width:1px;height:3px;background:#c0c7cb"></div><div class="a" style="left:111px;top:26.5px;width:1px;height:2px;background:#c0c7cb"></div><div class="a" style="left:116px;top:26.5px;width:1px;height:2px;background:#c0c7cb"></div><div class="a" style="left:120px;top:26.5px;width:1px;height:2px;background:#c0c7cb"></div><div class="a" style="left:124px;top:26.5px;width:1px;height:2px;background:#c0c7cb"></div><div class="a" style="left:129px;top:25.5px;width:1px;height:3px;background:#c0c7cb"></div><div class="a" style="left:133px;top:26.5px;width:1px;height:2px;background:#c0c7cb"></div><div class="a" style="left:137px;top:26.5px;width:1px;height:2px;background:#c0c7cb"></div><div class="a" style="left:141px;top:26.5px;width:1px;height:2px;background:#c0c7cb"></div><div class="a" style="left:146px;top:26.5px;width:1px;height:2px;background:#c0c7cb"></div><div class="a" style="left:150px;top:25.5px;width:1px;height:3px;background:#c0c7cb"></div><div class="a" style="left:154px;top:26.5px;width:1px;height:2px;background:#c0c7cb"></div><div class="a" style="left:159px;top:26.5px;width:1px;height:2px;background:#c0c7cb"></div><div class="a" style="left:163px;top:26.5px;width:1px;height:2px;background:#c0c7cb"></div><div class="a" style="left:167px;top:26.5px;width:1px;height:2px;background:#c0c7cb"></div><div class="a" style="left:171px;top:25.5px;width:1px;height:3px;background:#c0c7cb"></div><div class="a" style="left:176px;top:26.5px;width:1px;height:2px;background:#c0c7cb"></div><div class="a" style="left:180px;top:26.5px;width:1px;height:2px;background:#c0c7cb"></div><div class="a" style="left:184px;top:26.5px;width:1px;height:2px;background:#c0c7cb"></div><div class="a" style="left:189px;top:26.5px;width:1px;height:2px;background:#c0c7cb"></div><div class="a" style="left:193px;top:25.5px;width:1px;height:3px;background:#c0c7cb"></div><div class="a" style="left:197px;top:26.5px;width:1px;height:2px;background:#c0c7cb"></div><div class="a" style="left:201px;top:26.5px;width:1px;height:2px;background:#c0c7cb"></div><div class="a" style="left:206px;top:26.5px;width:1px;height:2px;background:#c0c7cb"></div><div class="a" style="left:210px;top:26.5px;width:1px;height:2px;background:#c0c7cb"></div><div class="a" style="left:214px;top:25.5px;width:1px;height:3px;background:#c0c7cb"></div><div class="a" style="left:219px;top:26.5px;width:1px;height:2px;background:#c0c7cb"></div><div class="a" style="left:223px;top:26.5px;width:1px;height:2px;background:#c0c7cb"></div><div class="a" style="left:227px;top:26.5px;width:1px;height:2px;background:#c0c7cb"></div><div class="a" style="left:231px;top:26.5px;width:1px;height:2px;background:#c0c7cb"></div><div class="a" style="left:236px;top:25.5px;width:1px;height:3px;background:#c0c7cb"></div><div class="a" style="left:240px;top:26.5px;width:1px;height:2px;background:#c0c7cb"></div><div class="a" style="left:244px;top:26.5px;width:1px;height:2px;background:#c0c7cb"></div><div class="a" style="left:249px;top:26.5px;width:1px;height:2px;background:#c0c7cb"></div><div class="a" style="left:253px;top:26.5px;width:1px;height:2px;background:#c0c7cb"></div><div class="a" style="left:257px;top:25.5px;width:1px;height:3px;background:#c0c7cb"></div><div class="a" style="left:261px;top:26.5px;width:1px;height:2px;background:#c0c7cb"></div><div class="a" style="left:266px;top:26.5px;width:1px;height:2px;background:#c0c7cb"></div><div class="a" style="left:270px;top:26.5px;width:1px;height:2px;background:#c0c7cb"></div><div class="a" style="left:274px;top:26.5px;width:1px;height:2px;background:#c0c7cb"></div><div class="a" style="left:279px;top:25.5px;width:1px;height:3px;background:#c0c7cb"></div><div class="a" style="left:283px;top:26.5px;width:1px;height:2px;background:#c0c7cb"></div><div class="a" style="left:287px;top:26.5px;width:1px;height:2px;background:#c0c7cb"></div><div class="a" style="left:291px;top:26.5px;width:1px;height:2px;background:#c0c7cb"></div><div class="a" style="left:296px;top:26.5px;width:1px;height:2px;background:#c0c7cb"></div><div class="a" style="left:300px;top:25.5px;width:1px;height:3px;background:#c0c7cb"></div><div class="a" style="left:304px;top:26.5px;width:1px;height:2px;background:#c0c7cb"></div><div class="a" style="left:309px;top:26.5px;width:1px;height:2px;background:#c0c7cb"></div><div class="a" style="left:313px;top:26.5px;width:1px;height:2px;background:#c0c7cb"></div><div class="a" style="left:317px;top:26.5px;width:1px;height:2px;background:#c0c7cb"></div><div class="a" style="left:321px;top:25.5px;width:1px;height:3px;background:#c0c7cb"></div><div class="a" style="left:326px;top:26.5px;width:1px;height:2px;background:#c0c7cb"></div><div class="a" style="left:330px;top:26.5px;width:1px;height:2px;background:#c0c7cb"></div><div class="a" style="left:334px;top:26.5px;width:1px;height:2px;background:#c0c7cb"></div><div class="a" style="left:339px;top:26.5px;width:1px;height:2px;background:#c0c7cb"></div><div class="a" style="left:343px;top:25.5px;width:1px;height:3px;background:#c0c7cb"></div><div class="a" style="left:347px;top:26.5px;width:1px;height:2px;background:#c0c7cb"></div><div class="a" style="left:351px;top:26.5px;width:1px;height:2px;background:#c0c7cb"></div><div class="a" style="left:356px;top:26.5px;width:1px;height:2px;background:#c0c7cb"></div><div class="a" style="left:360px;top:26.5px;width:1px;height:2px;background:#c0c7cb"></div><div class="a" style="left:364px;top:25.5px;width:1px;height:3px;background:#c0c7cb"></div><div class="a" style="left:369px;top:26.5px;width:1px;height:2px;background:#c0c7cb"></div><div class="a" style="left:373px;top:26.5px;width:1px;height:2px;background:#c0c7cb"></div><div class="a" style="left:377px;top:26.5px;width:1px;height:2px;background:#c0c7cb"></div><div class="a" style="left:381px;top:26.5px;width:1px;height:2px;background:#c0c7cb"></div><div class="a" style="left:386px;top:25.5px;width:1px;height:3px;background:#c0c7cb"></div><div class="a" style="left:390px;top:26.5px;width:1px;height:2px;background:#c0c7cb"></div><div class="a" style="left:394px;top:26.5px;width:1px;height:2px;background:#c0c7cb"></div><div class="a" style="left:399px;top:26.5px;width:1px;height:2px;background:#c0c7cb"></div><div class="a" style="left:403px;top:26.5px;width:1px;height:2px;background:#c0c7cb"></div><div class="a" style="left:407px;top:25.5px;width:1px;height:3px;background:#c0c7cb"></div><div class="a" style="left:411px;top:26.5px;width:1px;height:2px;background:#c0c7cb"></div><div class="a" style="left:416px;top:26.5px;width:1px;height:2px;background:#c0c7cb"></div><div class="a" style="left:420px;top:26.5px;width:1px;height:2px;background:#c0c7cb"></div><div class="a" style="left:424px;top:26.5px;width:1px;height:2px;background:#c0c7cb"></div><div class="a" style="left:429px;top:25.5px;width:1px;height:3px;background:#c0c7cb"></div><div class="a" style="left:433px;top:26.5px;width:1px;height:2px;background:#c0c7cb"></div><div class="a" style="left:437px;top:26.5px;width:1px;height:2px;background:#c0c7cb"></div><div class="a" style="left:441px;top:26.5px;width:1px;height:2px;background:#c0c7cb"></div><div class="a" style="left:446px;top:26.5px;width:1px;height:2px;background:#c0c7cb"></div><div class="a" style="left:450px;top:25.5px;width:1px;height:3px;background:#c0c7cb"></div></div>
 <!-- bars -->
 <div class="a" style="left:102px;top:30.5px;width:106px;height:11px;background:#e0e6e9;border:1px dotted #cdd3d6"></div>
 <div class="a" style="left:102px;top:43.5px;width:106px;height:11px;background:#e0e6e9;border:1px dotted #cdd3d6"></div>
 <svg class="a" style="left:105px;top:32px" width="8" height="8" viewBox="0 0 8 8"><path d="M0.5 1 L7.5 7" stroke="#555" stroke-width=".8"/></svg>
 <svg class="a" style="left:105px;top:45px" width="8" height="8" viewBox="0 0 8 8"><path d="M0.5 1 L7.5 7" stroke="#555" stroke-width=".8"/></svg>
 <span class="t" style="left:116.5px;top:33.5px;font-size:5.6px;color:#555">Line 2</span>
 <span class="t" style="left:116.5px;top:46.5px;font-size:5.6px;color:#555">Line 1</span>
 <svg class="a" style="left:204px;top:35px" width="3" height="4" viewBox="0 0 3 4"><path d="M.3 .5 L2.3 2 L.3 3.5z" fill="#555"/></svg>
 <svg class="a" style="left:204px;top:48px" width="3" height="4" viewBox="0 0 3 4"><path d="M.3 .5 L2.3 2 L.3 3.5z" fill="#555"/></svg>
 <div class="a" style="left:208px;top:30px;width:1px;height:82px;background:#c9d0d4"></div>
 <span class="t" style="left:211px;top:32px;font-size:4.6px;color:#b5b5b5">End</span>
 <!-- playhead -->
 <div class="a" style="left:101px;top:17.5px;width:1px;height:95px;background:#b3c4d1"></div>
 <svg class="a" style="left:99px;top:25px" width="6" height="4" viewBox="0 0 6 4"><path d="M0 0 H6 L3 4z" fill="#1a7ad4"/></svg>
 <!-- right scrollbar -->
 <div class="a" style="left:550px;top:17.5px;width:9px;height:95px;background:#dfe4e6"></div>
 <span class="t" style="left:552.5px;top:19px;font-size:3.5px;color:#888">▲</span>
 <span class="t" style="left:552.5px;top:105px;font-size:3.5px;color:#888">▼</span>
 <!-- bottom toolbar -->
 <div class="a" style="left:0;top:112px;width:101px;height:9px;background:#eef2f2;border-top:1px solid #e3e8e8"></div>
 <svg class="a" style="left:5.5px;top:114.5px" width="4" height="5" viewBox="0 0 4 5"><path d="M0 0 L3.2 2.5 L0 5z" fill="#555"/></svg>
 <div class="a" style="left:14.5px;top:114.5px;width:4px;height:4.5px;background:#777"></div>
 <div class="a" style="left:25.5px;top:113px;width:1px;height:7px;background:#d5dada"></div>
 <svg class="a" style="left:33px;top:116px" width="6" height="3.5" viewBox="0 0 6 3.5"><path d="M0 3.5 L3 0 L6 3.5z" fill="#777"/></svg>
 <svg class="a" style="left:42px;top:114.5px" width="15" height="5" viewBox="0 0 15 5"><rect x="0" y="2" width="14" height=".8" fill="#888"/><circle cx="3" cy="2.4" r="1.5" fill="#fff" stroke="#777" stroke-width=".7"/></svg>
 <svg class="a" style="left:60.5px;top:115px" width="12" height="4.5" viewBox="0 0 12 4.5"><path d="M0 4.5 L3 1.5 L5 3.2 L7.5 0 L11 4.5z" fill="#777"/></svg>
 <span class="t" style="left:79px;top:114.5px;font-size:5.2px;color:#555">00:05.00</span>
 <div class="a" style="left:101px;top:112px;width:449px;height:9px;background:#dfe4e6"></div>
 <span class="t" style="left:105.5px;top:113.5px;font-size:5px;color:#999">‹</span>
 <span class="t" style="left:544px;top:114px;font-size:4px;color:#888">›</span>
 <div class="a" style="left:550px;top:112px;width:9px;height:9px;background:#fff"></div>
</div>

<!-- TRIGGERS -->
<div id="trig" class="a">
 <div class="a" style="left:0;top:0;width:159px;height:35px;background:#edf3f3;border-bottom:1px solid #dfe5e5"></div>
 <span class="t" style="left:10.5px;top:4px;font-size:7.1px;color:#555">Triggers</span>
 <svg class="a" style="left:136.5px;top:6.5px" width="4" height="3" viewBox="0 0 4 3"><path d="M0 0 H4 L2 2.5z" fill="#888"/></svg>
 <svg class="a" style="left:144px;top:5px" width="7" height="7" viewBox="0 0 7 7"><rect x="1.4" y=".5" width="5" height="4" fill="none" stroke="#a5a5a5" stroke-width=".8"/><rect x=".5" y="2.3" width="5" height="4.2" fill="#fff" stroke="#a5a5a5" stroke-width=".8"/></svg>
 <!-- tool buttons -->
 <div class="a" style="left:9.2px;top:15.5px;width:11.5px;height:13px;background:#fff;border:1px solid #dde2e2"></div>
 <svg class="a" style="left:12.2px;top:18.5px" width="6" height="8" viewBox="0 0 6 8"><path d="M.6 .6 H3.6 L5.4 2.4 V7.4 H.6z" fill="#fff" stroke="#666" stroke-width=".7"/></svg>
 <div class="a" style="left:23.2px;top:15.5px;width:11px;height:13px;background:#eceff0;border:1px solid #d6dbdc"></div>
 <svg class="a" style="left:25.7px;top:18.5px" width="7" height="8" viewBox="0 0 7 8"><rect x=".6" y="1.2" width="5" height="6" fill="#fafafa" stroke="#a5a5a5" stroke-width=".6"/><path d="M2.2 5.5 L6.3 1.2" stroke="#888" stroke-width=".8"/></svg>
 <div class="a" style="left:36.2px;top:15.5px;width:11.5px;height:13px;background:#eceff0;border:1px solid #d6dbdc"></div>
 <svg class="a" style="left:38.7px;top:18.5px" width="7" height="8" viewBox="0 0 7 8"><path d="M.6 .6 H3 L4.4 2 V6.4 H.6z" fill="#fafafa" stroke="#a5a5a5" stroke-width=".6"/><path d="M2.2 2.2 H4.6 L6.4 4 V7.4 H2.2z" fill="#fafafa" stroke="#a5a5a5" stroke-width=".6"/></svg>
 <div class="a" style="left:49.7px;top:15.5px;width:11px;height:13px;background:#eceff0;border:1px solid #d6dbdc"></div>
 <svg class="a" style="left:52.2px;top:18.5px" width="7" height="8" viewBox="0 0 7 8"><path d="M.6 2.2 H3 L4.4 3.6 V7.4 H.6z" fill="#fafafa" stroke="#a5a5a5" stroke-width=".6"/><path d="M2.2 .6 H4.6 L6.4 2.4 V6 H4.4" fill="none" stroke="#a5a5a5" stroke-width=".6"/></svg>
 <div class="a" style="left:63.2px;top:15.5px;width:11.5px;height:13px;background:#eceff0;border:1px solid #d6dbdc"></div>
 <svg class="a" style="left:66.2px;top:18.5px" width="7" height="8" viewBox="0 0 7 8"><path d="M.5 1.6 H6.5 M2.5 1.6 V.6 H4.5 V1.6 M1.3 1.6 L1.9 7.4 H5.1 L5.7 1.6" fill="none" stroke="#a5a5a5" stroke-width=".6"/></svg>
 <div class="a" style="left:76.2px;top:15.5px;width:12px;height:13px;background:#eceff0;border:1px solid #d6dbdc"></div>
 <div class="a" style="left:77.2px;top:22.3px;width:10px;height:1px;background:#d6dbdc"></div>
 <svg class="a" style="left:80.2px;top:19px" width="4" height="9" viewBox="0 0 4 9"><path d="M0 2.5 L2 .5 L4 2.5z M0 6 L2 8 L4 6z" fill="#a0a0a0"/></svg>
 <div class="a" style="left:107px;top:18px;width:8px;height:8px;background:#fff;border:1px solid #dde2e2"></div>
 <svg class="a" style="left:108px;top:19px" width="6" height="6" viewBox="0 0 6 6"><path d="M.8 3.2 L2.4 4.8 L5.4 1.4" stroke="#1f7ad0" stroke-width="1" fill="none"/></svg>
 <span class="t" style="left:119px;top:20px;font-size:6.2px;color:#5a5a5a">Group</span>
 <div class="a" style="left:139px;top:16px;width:12px;height:12px;background:#fff;border:1px solid #dde2e2"></div>
 <svg class="a" style="left:141px;top:18px" width="8" height="8" viewBox="0 0 8 8"><rect x=".6" y=".6" width="6.8" height="6.8" rx=".6" fill="#e6eef6" stroke="#7e96ad" stroke-width=".7"/><rect x=".6" y=".6" width="6.8" height="1.4" fill="#8aa0b5"/><rect x="3.5" y="4" width="1" height="1" fill="#5a7a9a"/></svg>
 <!-- player triggers -->
 <div class="a" style="left:0;top:35px;width:159px;height:13px;background:#edf3f3;border-bottom:1px solid #e4e9e9"></div>
 <span class="t" style="left:5.5px;top:37.5px;font-size:6.35px;color:#3c3c3c;-webkit-text-stroke:.2px #3c3c3c">Player Triggers</span>
 <svg class="a" style="left:151px;top:38px" width="4" height="7" viewBox="0 0 4 7"><path d="M0 0 H4 M0 7 H4 M2 0 V7" stroke="#999" stroke-width=".7"/><path d="M.5 2 L2 3.3 L3.5 2 M.5 5 L2 3.7 L3.5 5" stroke="#999" stroke-width=".6" fill="none"/></svg>
 <span class="t" style="left:6px;top:52px;font-size:4px;color:#777">▾</span>
 <span class="t" style="left:17px;top:52px;font-size:5.6px;color:#333;font-weight:bold">Next Button / Swipe Next</span>
 <div class="a" style="left:0;top:59px;width:159px;height:1px;background:#eceff0"></div>
 <span class="t" style="left:17px;top:64px;font-size:5.3px;color:#555">When the <span style="color:#56680e">user clicks</span> or <span style="color:#56680e">swipes</span> <span style="color:#1d65ad">next</span></span>
 <span class="t" style="left:19px;top:73px;font-size:5.5px;color:#555">⁃ Jump to slide <span style="color:#1d65ad">next slide</span></span>
 <div class="a" style="left:0;top:82px;width:159px;height:1px;background:#eceff0"></div>
 <span class="t" style="left:6px;top:86px;font-size:4px;color:#777">▾</span>
 <span class="t" style="left:17px;top:86px;font-size:5.35px;color:#333;font-weight:bold">Previous Button / Swipe Previous</span>
 <div class="a" style="left:0;top:94px;width:159px;height:1px;background:#eceff0"></div>
 <span class="t" style="left:17px;top:99px;font-size:5.3px;color:#555">When the <span style="color:#56680e">user clicks</span> or <span style="color:#56680e">swipes</span> <span style="color:#1d65ad">previous</span></span>
 <span class="t" style="left:19px;top:108px;font-size:5.5px;color:#555">⁃ Jump to slide <span style="color:#1d65ad">previous slide</span></span>
 <div class="a" style="left:0;top:116px;width:159px;height:1px;background:#eceff0"></div>
</div>

<!-- LAYERS -->
<div id="layers" class="a">
 <div class="a" style="left:0;top:0;width:159px;height:18px;background:#edf2f2;border-top:1px solid #dfe5e5;border-bottom:1px solid #dfe5e5"></div>
 <span class="t" style="left:9.5px;top:6.8px;font-size:7px;color:#555">Slide Layers</span>
 <svg class="a" style="left:136.5px;top:9.5px" width="4" height="3" viewBox="0 0 4 3"><path d="M0 0 H4 L2 2.5z" fill="#888"/></svg>
 <svg class="a" style="left:143.5px;top:7.5px" width="7" height="7" viewBox="0 0 7 7"><rect x="1.4" y=".5" width="5" height="4" fill="none" stroke="#a5a5a5" stroke-width=".8"/><rect x=".5" y="2.3" width="5" height="4.2" fill="#fff" stroke="#a5a5a5" stroke-width=".8"/></svg>
 <div class="a" style="left:2px;top:78px;width:156px;height:14px;background:#0e78d5"></div>
 <div class="a" style="left:10px;top:81px;width:14px;height:8px;background:#fff"></div>
 <span class="t" style="left:30px;top:82.5px;font-size:5.3px;color:#e8f2fb">Untitled Slide</span>
 <span class="t" style="left:112px;top:82.5px;font-size:5.2px;color:#e8f2fb;font-style:italic">(Base Layer)</span>
 <svg class="a" style="left:146.5px;top:83px" width="5" height="4" viewBox="0 0 5 4"><ellipse cx="2.5" cy="2" rx="2.4" ry="1.6" fill="#fff"/><circle cx="2.5" cy="2" r=".7" fill="#0e78d5"/></svg>
 <div class="a" style="left:0;top:93px;width:159px;height:22px;background:#eef2f2"></div>
 <div class="a" style="left:10px;top:98px;width:12px;height:12px;background:#fff;border:1px solid #d8dddd"></div>
 <svg class="a" style="left:13px;top:100px" width="6" height="8" viewBox="0 0 6 8"><path d="M0.5 0.5 H3.7 L5.5 2.3 V7.5 H0.5z" fill="#fff" stroke="#555" stroke-width=".8"/></svg>
 <div class="a" style="left:24px;top:98px;width:12px;height:12px;background:#fff;border:1px solid #d8dddd"></div>
 <svg class="a" style="left:26px;top:100px" width="8" height="8" viewBox="0 0 8 8"><rect x="2.5" y=".5" width="5" height="5" fill="#fff" stroke="#555" stroke-width=".7"/><rect x=".5" y="2.5" width="5" height="5" fill="#fff" stroke="#555" stroke-width=".7"/><path d="M1.5 5 L3 6.5 L5.5 3" stroke="#2a9a3a" stroke-width=".9" fill="none"/></svg>
 <div class="a" style="left:37px;top:98px;width:12px;height:12px;background:#e6eaea;border:1px solid #d8dddd"></div>
 <svg class="a" style="left:40px;top:100px" width="7" height="8" viewBox="0 0 7 8"><path d="M.5 1.5 H6.5 M2.5 1.5 V.5 H4.5 V1.5 M1.2 1.5 L1.8 7.5 H5.2 L5.8 1.5" fill="none" stroke="#aaa" stroke-width=".7"/></svg>
 <div class="a" style="left:54px;top:102px;width:8px;height:8px;background:#fff;border:1px solid #dde2e2"></div>
 <svg class="a" style="left:55px;top:103px" width="6" height="6" viewBox="0 0 6 6"><path d="M.8 3.2 L2.4 4.8 L5.4 1.4" stroke="#1f7ad0" stroke-width="1" fill="none"/></svg>
 <span class="t" style="left:65.5px;top:102px;font-size:6.4px;color:#555">Dim</span>
 <div class="a" style="left:143px;top:98px;width:12px;height:12px;background:#fff;border:1px solid #d8dddd"></div>
 <span class="t" style="left:145.5px;top:99.5px;font-size:7.5px;color:#777">⚙</span>
</div>

<!-- STATUS -->
<div id="status" class="a">
 <span class="t" style="left:2px;top:4.5px">Slide 1 of 1</span>
 <span class="t" style="left:34px;top:4.5px">720 × 540</span>
 <span class="t" style="left:64px;top:4.5px">"Clean"</span>
 <span class="t" style="left:87px;top:4.5px">Feature Flags</span>
 <svg class="a" style="left:686px;top:4px" width="5" height="5" viewBox="0 0 5 5"><rect x="0" y="0" width="2" height="2" fill="#ccc"/><rect x="3" y="0" width="2" height="2" fill="#ccc"/><rect x="0" y="3" width="2" height="2" fill="#ccc"/><rect x="3" y="3" width="2" height="2" fill="#ccc"/></svg>
 <div class="a" style="left:694px;top:2px;width:9px;height:10px;background:#3c3c40"></div>
 <svg class="a" style="left:696px;top:4px" width="5" height="6" viewBox="0 0 5 6"><rect x="0" y="0" width="2" height="6" fill="#ccc"/><rect x="3" y="0" width="2" height="1.2" fill="#ccc"/><rect x="3" y="2.4" width="2" height="1.2" fill="#ccc"/><rect x="3" y="4.8" width="2" height="1.2" fill="#ccc"/></svg>
 <svg class="a" style="left:708px;top:4px" width="5" height="5" viewBox="0 0 5 5"><path d="M0 .5 H5 L3 3 V5 H2 V3z" fill="none" stroke="#bbb" stroke-width=".7"/></svg>
 <span class="t" style="left:717px;top:4.5px;color:#999">73%</span>
 <div class="a" style="left:731.5px;top:6.5px;width:3px;height:1px;background:#bbb"></div>
 <div class="a" style="left:736px;top:6.5px;width:45px;height:1px;background:#aaa"></div>
 <div class="a" style="left:751px;top:5px;width:4px;height:4px;border-radius:50%;background:#2a2a2e;border:1px solid #ddd"></div>
 <div class="a" style="left:759px;top:5px;width:1px;height:4px;background:#ccc"></div>
 <span class="t" style="left:783px;top:3.5px;font-size:6px;color:#ccc">+</span>
 <svg class="a" style="left:790.5px;top:3.5px" width="6" height="6" viewBox="0 0 6 6"><path d="M0 2 V0 H2 M4 0 H6 V2 M6 4 V6 H4 M2 6 H0 V4 M1.5 1.5 L4.5 4.5 M4.5 1.5 L1.5 4.5" stroke="#ccc" stroke-width=".7" fill="none"/></svg>
</div>

<!-- TASKBAR -->
<div id="taskbar" class="a">
 <svg class="a" style="left:326px;top:6px" width="11" height="11" viewBox="0 0 11 11"><rect x="0" y="0" width="5.2" height="5.2" fill="#1f8de0"/><rect x="5.8" y="0" width="5.2" height="5.2" fill="#2aa0ee"/><rect x="0" y="5.8" width="5.2" height="5.2" fill="#1a80d8"/><rect x="5.8" y="5.8" width="5.2" height="5.2" fill="#2296e4"/></svg>
 <svg class="a" style="left:346px;top:6px" width="12" height="12" viewBox="0 0 12 12"><circle cx="6" cy="6" r="5.6" fill="#1c8ed6"/><path d="M6 .4 A5.6 5.6 0 0 1 11.6 6 H6z" fill="#47c25a"/><circle cx="6.5" cy="6.5" r="2.4" fill="#dde5f2"/><rect x="1" y="8" width="4" height="3.5" fill="#e05a20"/></svg>
 <svg class="a" style="left:366px;top:6px" width="12" height="11" viewBox="0 0 12 11"><path d="M0 1 H4.5 L5.5 2.2 H12 V11 H0z" fill="#f0b429"/><rect x="0" y="4" width="12" height="7" fill="#f8c840"/><rect x="3" y="7" width="7" height="3" fill="#3d8fd8"/></svg>
 <svg class="a" style="left:386px;top:6px" width="11" height="11" viewBox="0 0 11 11"><rect x="0" y="0" width="11" height="8" fill="#222"/><rect x="1.5" y="2" width="4" height="1" fill="#ddd"/><path d="M4 6 L8 10 L11 7 L7 4z" fill="#e03030"/><path d="M7 8 L9 10.5 L11 8.5" fill="#3ab03a"/><path d="M8 5.5 L10 7.5 L11 6" fill="#f0d030"/></svg>
 <svg class="a" style="left:405px;top:5px" width="13" height="13" viewBox="0 0 13 13"><circle cx="6" cy="7" r="5.5" fill="#e04030"/><path d="M6 7 L11.5 7 A5.5 5.5 0 0 1 3.2 11.8z" fill="#f5c020"/><path d="M6 7 L3.2 11.8 A5.5 5.5 0 0 1 .5 7 A5.5 5.5 0 0 1 1.5 3.8z" fill="#35a853"/><circle cx="6" cy="7" r="2.3" fill="#4285f4" stroke="#fff" stroke-width=".8"/><circle cx="10.5" cy="2.5" r="2.2" fill="#c8a070"/></svg>
 <svg class="a" style="left:425px;top:6px" width="11" height="11" viewBox="0 0 11 11"><path d="M2 0 H9" stroke="#68b8e8" stroke-width="1.4"/><circle cx="5.5" cy="6" r="3.5" fill="none" stroke="#4aa8e0" stroke-width="1.6"/><path d="M9 4 V10" stroke="#4aa8e0" stroke-width="1.4"/></svg>
 <div class="a" style="left:441px;top:2px;width:18px;height:18px;background:#eef2f9;border-radius:2px"></div>
 <svg class="a" style="left:444px;top:6px" width="12" height="12" viewBox="0 0 12 12"><circle cx="6" cy="6" r="5.8" fill="#c84fb0"/><rect x="4" y="3" width="4" height="5" fill="#f3d0ea"/></svg>
 <div class="a" style="left:446px;top:18px;width:8px;height:1.5px;background:#1a78d0;border-radius:1px"></div>
 <svg class="a" style="left:464px;top:6px" width="12" height="12" viewBox="0 0 12 12"><rect x="0" y="0" width="12" height="12" rx="1.5" fill="#d42a2a"/><path d="M2.5 3 L4 6 L5.5 3 M4 6 V9.5 M8 3 V9.5" stroke="#fff" stroke-width="1.2" fill="none"/></svg>
 <div class="a" style="left:354px;top:18.5px;width:3px;height:1px;background:#888"></div>
 <div class="a" style="left:410px;top:18.5px;width:3px;height:1px;background:#888"></div>
 <div class="a" style="left:429px;top:18.5px;width:3px;height:1px;background:#888"></div>
 <div class="a" style="left:468px;top:18.5px;width:3px;height:1px;background:#888"></div>
 <svg class="a" style="left:704.5px;top:8px" width="6" height="4" viewBox="0 0 6 4"><path d="M.5 3.5 L3 1 L5.5 3.5" stroke="#333" stroke-width=".9" fill="none"/></svg>
 <svg class="a" style="left:716px;top:6px" width="9" height="9" viewBox="0 0 9 9"><rect x=".5" y="1.5" width="7" height="5.5" fill="none" stroke="#333" stroke-width=".9"/><path d="M3 8.5 H6" stroke="#333" stroke-width=".9"/><circle cx="7.5" cy="1.5" r="1.2" fill="#333"/></svg>
 <svg class="a" style="left:728px;top:6.5px" width="8" height="7" viewBox="0 0 8 7"><path d="M0 2.5 H2 L4 .5 V6.5 L2 4.5 H0z" fill="#333"/><path d="M5.2 2 Q6 3.5 5.2 5 M6.5 1 Q8 3.5 6.5 6" stroke="#333" stroke-width=".7" fill="none"/></svg>
 <svg class="a" style="left:739px;top:7px" width="8" height="6" viewBox="0 0 8 6"><rect x="0" y="1" width="7" height="5" rx="1" fill="#333"/><rect x="1" y="0" width="2" height="1" fill="#333"/></svg>
 <span class="t" style="left:762px;top:6px;font-size:5.5px;color:#222">1:46 AM</span>
 <span class="t" style="left:753px;top:13px;font-size:5.5px;color:#222">11/16/2023</span>
 <div class="a" style="left:785px;top:7.5px;width:7px;height:7px;border-radius:50%;background:#1a78d0"></div>
 <span class="t" style="left:787.5px;top:9px;font-size:4px;color:#fff">1</span>
</div>
</body></html>
